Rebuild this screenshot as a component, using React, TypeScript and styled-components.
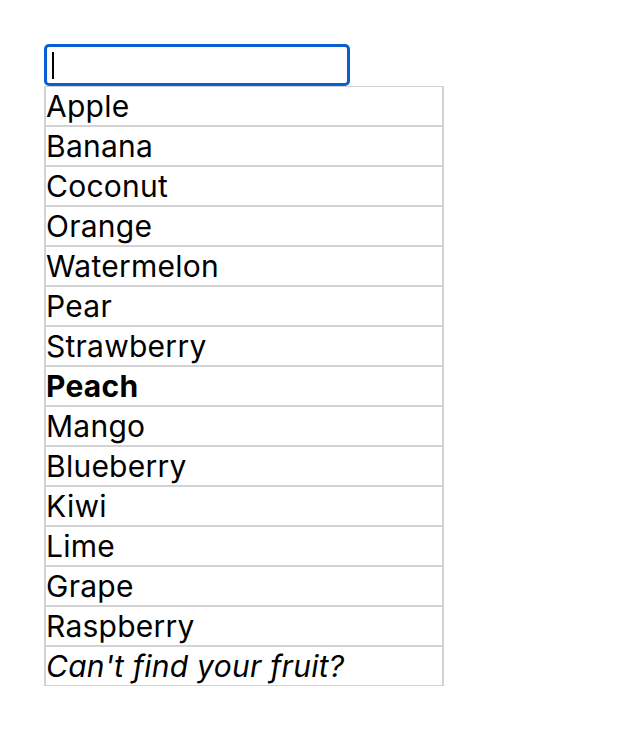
import { useState } from "react";
import styled, { createGlobalStyle } from "styled-components";

const GlobalStyle = createGlobalStyle`
  body {
    margin: 0;
    background: #fff;
    font-family: Inter, "Noto Sans", sans-serif;
    color: #000;
  }
`;

const Wrapper = styled.div`
  padding: 44px 0 0 44px;
  display: flex;
  flex-direction: column;
  align-items: flex-start;
`;

const Field = styled.div`
  position: relative;

  &::after {
    content: "";
    position: absolute;
    left: 8px;
    top: 8px;
    width: 2px;
    height: 27px;
    background: #000;
    pointer-events: none;
  }
`;

const SearchInput = styled.input`
  box-sizing: border-box;
  display: block;
  width: 306px;
  height: 42px;
  margin: 0;
  padding: 0 6px;
  border: 3px solid #0b60d0;
  border-radius: 5px;
  outline: none;
  font-family: inherit;
  font-size: 28px;
  caret-color: transparent;
`;

const List = styled.ul`
  list-style: none;
  margin: 0;
  padding: 0;
  width: 400px;
  box-sizing: border-box;
  border-left: 1px solid #d3d3d3;
  border-right: 1px solid #d3d3d3;
`;

type Variant = "normal" | "selected" | "fallback";

const Item = styled.li<{ $variant: Variant }>`
  box-sizing: border-box;
  height: 40px;
  border: 1px solid #d3d3d3;
  border-left: none;
  border-right: none;
  padding: 1px 2px 0 1px;
  font-size: 30px;
  letter-spacing: 0.25px;
  line-height: 37px;
  font-weight: ${(p) => (p.$variant === "selected" ? 700 : 400)};
  font-style: ${(p) => (p.$variant === "fallback" ? "italic" : "normal")};
  white-space: nowrap;
  box-shadow: inset 1px 0 0 #d3d3d3, inset -1px 0 0 #d3d3d3;
`;

const fruits = [
  "Apple",
  "Banana",
  "Coconut",
  "Orange",
  "Watermelon",
  "Pear",
  "Strawberry",
  "Peach",
  "Mango",
  "Blueberry",
  "Kiwi",
  "Lime",
  "Grape",
  "Raspberry",
];

export default function App() {
  const [query, setQuery] = useState("");
  const selected = "Peach";

  return (
    <>
      <GlobalStyle />
      <Wrapper>
        <Field>
          <SearchInput
            autoFocus
            value={query}
            onChange={(e) => setQuery(e.target.value)}
          />
        </Field>
        <List>
          {fruits.map((f) => (
            <Item key={f} $variant={f === selected ? "selected" : "normal"}>
              {f}
            </Item>
          ))}
          <Item $variant="fallback">Can't find your fruit?</Item>
        </List>
      </Wrapper>
    </>
  );
}
